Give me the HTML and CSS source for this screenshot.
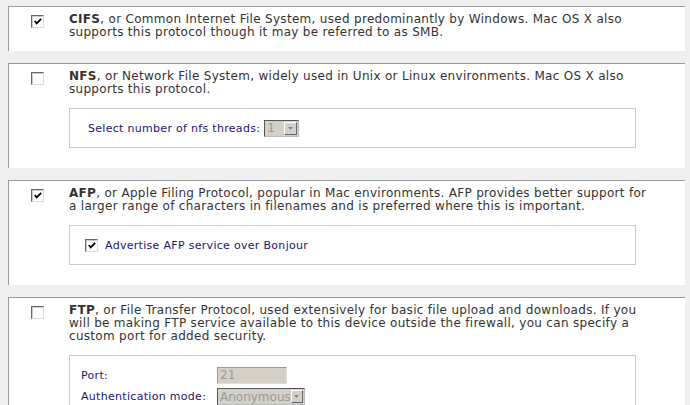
FILE: index.html
```html
<!DOCTYPE html>
<html>
<head>
<meta charset="utf-8">
<link rel="stylesheet" href="styles.css">
</head>
<body>
<div class="page">
  <section class="panel">
    <div class="row">
      <span class="cb"><svg viewBox="0 0 11 11" width="11" height="11"><path d="M2 5 L4 7.5 L9 2.5" fill="none" stroke="#000" stroke-width="2"/></svg></span>
      <div class="body">
        <p class="desc"><b>CIFS</b>, or Common Internet File System, used predominantly by Windows. Mac OS X also<br>supports this protocol though it may be referred to as SMB.</p>
      </div>
    </div>
  </section>

  <section class="panel">
    <div class="row">
      <span class="cb"></span>
      <div class="body">
        <p class="desc"><b>NFS</b>, or Network File System, widely used in Unix or Linux environments. Mac OS X also<br>supports this protocol.</p>
        <div class="inner inner-line">
          <span class="label">Select number of nfs threads:</span>
          <span class="select sel-small"><span class="val">1</span><span class="btn"><svg viewBox="0 0 5 3" width="5" height="3"><path d="M0 0 H5 L2.5 3 Z" fill="#888"/></svg></span></span>
        </div>
      </div>
    </div>
  </section>

  <section class="panel">
    <div class="row">
      <span class="cb"><svg viewBox="0 0 11 11" width="11" height="11"><path d="M2 5 L4 7.5 L9 2.5" fill="none" stroke="#000" stroke-width="2"/></svg></span>
      <div class="body">
        <p class="desc"><b>AFP</b>, or Apple Filing Protocol, popular in Mac environments. AFP provides better support for<br>a larger range of characters in filenames and is preferred where this is important.</p>
        <div class="inner inner-line afp">
          <span class="cb"><svg viewBox="0 0 11 11" width="11" height="11"><path d="M2 5 L4 7.5 L9 2.5" fill="none" stroke="#000" stroke-width="2"/></svg></span>
          <span class="label">Advertise AFP service over Bonjour</span>
        </div>
      </div>
    </div>
  </section>

  <section class="panel">
    <div class="row">
      <span class="cb"></span>
      <div class="body">
        <p class="desc"><b>FTP</b>, or File Transfer Protocol, used extensively for basic file upload and downloads. If you<br>will be making FTP service available to this device outside the firewall, you can specify a<br>custom port for added security.</p>
        <div class="inner form">
          <span class="label">Port:</span>
          <span class="input">21</span>
          <span class="label">Authentication mode:</span>
          <span class="select sel-wide"><span class="val">Anonymous</span><span class="btn"><svg viewBox="0 0 5 3" width="5" height="3"><path d="M0 0 H5 L2.5 3 Z" fill="#888"/></svg></span></span>
        </div>
      </div>
    </div>
  </section>
</div>
</body>
</html>
```

FILE: styles.css
```css
html, body {
  margin: 0;
  padding: 0;
  background: #efefef;
}
body {
  font-family: "DejaVu Sans", Verdana, sans-serif;
  font-size: 12px;
  letter-spacing: 0.3px;
  color: #333;
}
.page {
  padding: 6px 5px 0 8px;
  display: flex;
  flex-direction: column;
  gap: 12px;
}
.panel {
  background: #fff;
  border-top: 1px solid #999;
  border-left: 1px solid #999;
  padding: 6px 0 12px 0;
}
.panel:nth-child(2), .panel:nth-child(3), .panel:nth-child(4) { padding-bottom: 20px; }
.row {
  display: grid;
  grid-template-columns: 60px minmax(0, 1fr);
}
.row > .cb {
  margin: 2px 0 0 22px;
}
.cb {
  box-sizing: border-box;
  width: 13px;
  height: 13px;
  border: 1px solid;
  border-color: #666 #ddd #ddd #666;
  box-shadow: inset 1px 1px 0 #ccc;
  background: #fff;
  display: inline-flex;
  align-items: center;
  justify-content: center;
}
.cb svg { display: block; margin: 0 0 0 1px; }
.body { padding-right: 49px; min-width: 0; }
.desc {
  margin: 0;
  line-height: 13px;
  white-space: nowrap;
}
.inner {
  margin-top: 12px;
  border: 1px solid #ccc;
  box-sizing: border-box;
  font-size: 11px;
  letter-spacing: 0.3px;
}
.inner-line {
  height: 40px;
  display: flex;
  align-items: center;
  padding-left: 18px;
  gap: 4px;
}
.afp { padding-left: 15px; gap: 7px; }
.label { color: #1f1270; white-space: nowrap; }
.select {
  box-sizing: border-box;
  height: 17px;
  display: inline-flex;
  align-items: center;
  justify-content: space-between;
  background: #d4d0c8;
  border: 1px solid;
  border-color: #555 #bbb #bbb #555;
  color: #999;
  padding: 0 1px 0 2px;
  letter-spacing: 0;
  font-size: 12px;
}
.sel-small { width: 35px; }
.sel-wide { width: 88px; }
.btn {
  width: 13px;
  height: 13px;
  box-sizing: border-box;
  border: 1px solid;
  border-color: #fff #666 #666 #fff;
  background: #d4d0c8;
  display: inline-flex;
  align-items: center;
  justify-content: center;
}
.btn svg { display: block; }
.form {
  display: grid;
  grid-template-columns: 136px auto;
  justify-content: start;
  align-items: center;
  row-gap: 4px;
  padding: 11px 0 12px 11px;
}
.input {
  box-sizing: border-box;
  width: 70px;
  height: 17px;
  background: #d4d0c8;
  border: 1px solid;
  border-color: #999 #ddd #ddd #999;
  color: #999;
  padding-left: 2px;
  line-height: 15px;
  letter-spacing: 0;
  font-size: 12px;
}
```
